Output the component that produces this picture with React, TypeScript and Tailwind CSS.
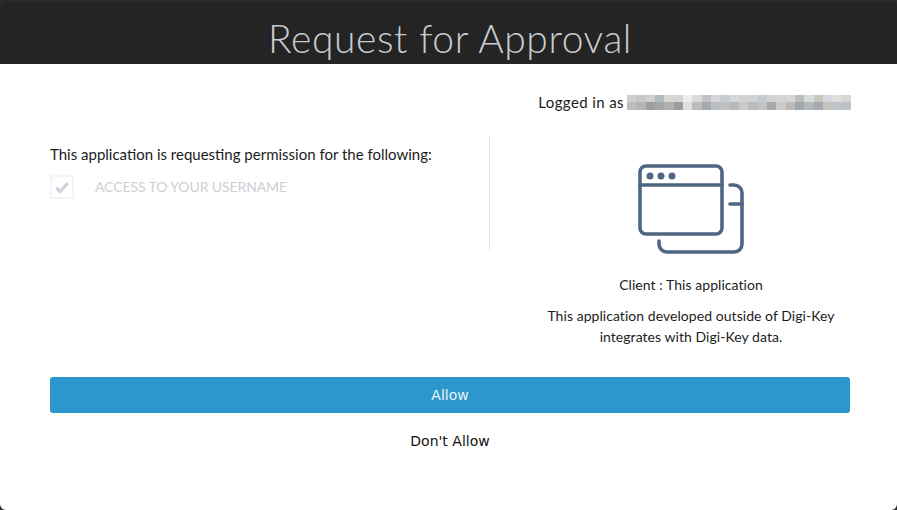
const topRow = ['#d2cfcb','#c4c8cc','#d2d0cc','#b3bac0','#d8d8d6','#d4d6d6','#eceef4','#dcdcd6','#c0c2c4','#d4d6d8','#c8ccd0','#d6d8da','#cfd0d0','#d0d2d4','#c6cacc','#d4d2d0','#d2d4d6','#d8d6d2','#bcbebe','#d8dadc','#c6c8c0','#d4dade','#e2dedc','#d4d6d8'];
const bottomRow = ['#c0bdb8','#b4b6b6','#9ea0a0','#a4a8aa','#b0b2ae','#9c9e9e','#dcdee0','#bcbcb8','#a6a8aa','#b8bec4','#bfc2c4','#bcb8b6','#c8cac8','#b8bcbe','#c2c4c4','#a8aaaa','#cdc9c4','#bdbab2','#9fa8b0','#b4b8bc','#a8aaae','#c4c2bc','#c0c4c8','#bcc0c8'];

export default function App() {
  return (
    <div className="h-[510px] w-[897px] overflow-hidden bg-[#2b2b2b] pt-px font-['Lato',sans-serif] text-[14px] text-[#1c1c1c]">
      <div className="flex h-[63px] items-end justify-center rounded-t-[6px] bg-[#242424] pl-[3px]">
        <h1 className="mb-[2px] text-[39px] leading-[48px] font-light tracking-[0.6px] text-[#c9ccd0]">Request for Approval</h1>
      </div>
      <div className="h-[446px] rounded-b-[6px] bg-white pt-[27px] pr-[47px] pl-[50px]">
        <div className="flex h-[22px] items-center justify-end">
          <span className="text-[15px] tracking-[0.4px]">Logged in as</span>
          <div className="mr-[-1px] ml-[3px] flex h-[15px] w-[224px] flex-col">
            <div className="flex flex-1">
              {topRow.map((c, i) => <div key={i} className="flex-1" style={{ backgroundColor: c }} />)}
            </div>
            <div className="flex flex-1">
              {bottomRow.map((c, i) => <div key={i} className="flex-1" style={{ backgroundColor: c }} />)}
            </div>
          </div>
        </div>

        <div className="mt-[22px] flex h-[220px]">
          <div className="h-[115px] w-[440px] border-r border-[#e4e6e8] pt-[9px]">
            <p className="text-[15px] leading-5">This application is requesting permission for the following:</p>
            <div className="mt-[11px] flex items-center">
              <div className="flex h-[24px] w-[24px] items-center justify-center rounded-[2px] border-2 border-[#f2f4f6]">
                <svg viewBox="0 0 16 16" className="h-[14px] w-[14px]" fill="none" stroke="#cfd5de" strokeWidth="4">
                  <path d="M1.5 8.5 6 13 14.5 3.5" />
                </svg>
              </div>
              <span className="-mt-[2px] ml-[21px] tracking-[-0.1px] text-[#ccd0d4]">ACCESS TO YOUR USERNAME</span>
            </div>
          </div>

          <div className="flex flex-1 flex-col items-center pt-[29px] pl-[42px] text-center">
            <svg viewBox="0 0 106 90" className="h-[90px] w-[106px]" fill="none" stroke="#4f6682" strokeWidth="3.6" strokeLinecap="round">
              <rect x="2" y="2" width="82" height="68" rx="6" />
              <path d="M2 21H84" />
              <circle cx="12" cy="12" r="3.5" fill="#4f6682" stroke="none" />
              <circle cx="23" cy="12" r="3.5" fill="#4f6682" stroke="none" />
              <circle cx="34" cy="12" r="3.5" fill="#4f6682" stroke="none" />
              <path d="M92 21h4a8 8 0 0 1 8 8v51a8 8 0 0 1-8 8H29a8 8 0 0 1-8-8v-3" />
              <path d="M92 40H104" />
            </svg>
            <p className="mt-[21px] leading-5 tracking-[0.05px]">Client : This application</p>
            <p className="mt-[10px] w-[300px] leading-[21px] tracking-[0.05px]">This application developed outside of Digi-Key integrates with Digi-Key data.</p>
          </div>
        </div>

        <button className="mt-[22px] block h-[36px] w-full rounded-[3px] bg-[#2b97cc] font-['DejaVu_Sans',sans-serif] text-[14px] text-white/90">Allow</button>
        <button className="mx-auto mt-[18px] block font-['DejaVu_Sans',sans-serif] text-[14px] leading-5 text-[#111]">Don't Allow</button>
      </div>
    </div>
  );
}
